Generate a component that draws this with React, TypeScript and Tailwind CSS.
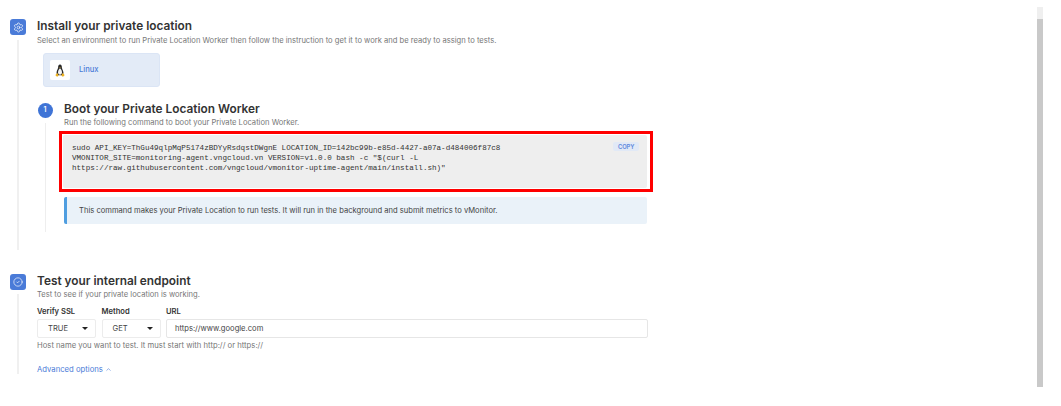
import { Settings, CircleCheck, ChevronUp } from "lucide-react";

function Tux() {
  return (
    <svg width="10" height="13" viewBox="0 0 12 14" preserveAspectRatio="none">
      <path d="M6 0.5C4.2 0.5 3.7 2 3.8 3.6C3.8 5 2.2 6.6 1.9 9C1.7 10.6 2.6 11.6 3.2 12H8.8C9.6 11.4 10.4 10.4 10.1 8.8C9.7 6.6 8.2 5 8.2 3.6C8.3 2 7.8 0.5 6 0.5Z" fill="#2a2a2a" />
      <path d="M6 4.6C4.8 5.2 3.6 7.2 3.6 9C3.6 10.6 4.6 11.6 6 11.6C7.4 11.6 8.4 10.6 8.4 9C8.4 7.2 7.2 5.2 6 4.6Z" fill="#f4f4f4" />
      <path d="M5 3.4L7 3.4L6 4.6Z" fill="#e8a81c" />
      <path d="M0.8 11.4L3 9.8L4.4 12.4L2.6 13.6L0.8 12.6Z" fill="#eeb11e" />
      <path d="M11.2 11.4L9 9.8L7.6 12.4L9.4 13.6L11.2 12.6Z" fill="#eeb11e" />
    </svg>
  );
}

function Caret() {
  return (
    <svg width="6" height="3" viewBox="0 0 6 3" className="shrink-0">
      <path d="M0 0H6L3 3Z" fill="#222" />
    </svg>
  );
}

function Select({ value, className }: { value: string; className: string }) {
  return (
    <div className={`flex h-[19px] items-center justify-between rounded-[2px] border border-[#ececec] bg-white pl-[10px] pr-[7px] text-[7.6px] text-[#444] ${className}`}>
      <span>{value}</span>
      <Caret />
    </div>
  );
}

export default function App() {
  return (
    <div className="relative h-[406px] w-[1061px] overflow-hidden bg-white pl-[10px] pt-[19px] font-['Inter',sans-serif]">
      <section className="flex h-[231px] w-[640px] gap-[11px]">
        <div className="flex w-[16px] shrink-0 flex-col items-center">
          <div className="flex h-[16px] w-[16px] items-center justify-center rounded-[3px] bg-[#4a7bd8]">
            <Settings size={11} color="#fff" strokeWidth={1.5} />
          </div>
          <div className="mt-[5px] w-[2px] flex-1 bg-[#f0f0f0]" />
        </div>
        <div className="min-w-0 flex-1">
          <h2 className="text-[11.85px] font-semibold leading-[15px] text-[#333]">Install your private location</h2>
          <p className="mt-[2px] whitespace-nowrap text-[7.6px] leading-[9px] text-[#777]">
            Select an environment to run Private Location Worker then follow the instruction to get it to work and be ready to assign to tests.
          </p>
          <div className="ml-[6px] mt-[8px] flex h-[34px] w-[117px] items-center gap-[9px] rounded-[3px] border border-[#dbe5f5] bg-[#e3ebf7] pl-[6px]">
            <div className="flex h-[20px] w-[20px] items-center justify-center rounded-[2px] bg-white">
              <Tux />
            </div>
            <span className="text-[7.6px] font-medium text-[#4a7bd8]">Linux</span>
          </div>
          <div className="ml-[1px] mt-[16px] flex gap-[12px]">
            <div className="flex w-[14px] shrink-0 flex-col items-center">
              <div className="flex h-[15px] w-[15px] shrink-0 items-center justify-center rounded-full bg-[#3f74d6] text-[7px] font-semibold text-white">1</div>
              <div className="mt-[5px] h-[109px] w-[1px] bg-[#eeeeee]" />
            </div>
            <div className="-mt-[1px] min-w-0">
              <h3 className="text-[11.85px] font-semibold leading-[15px] text-[#333]">Boot your Private Location Worker</h3>
              <p className="mt-[1px] text-[7.6px] leading-[9px] text-[#777]">Run the following command to boot your Private Location Worker.</p>
              <div className="-ml-[5px] mt-[4px] h-[61px] w-[594px] border-[3px] border-[#ff0000] bg-white pb-[1px] pl-[1px] pr-[3px] pt-[1px]">
                <div className="flex h-full items-start justify-between rounded-[2px] bg-[#eeeeee] pl-[9px] pr-[8px] pt-[7px]">
                  <pre className="mt-[1px] font-['Liberation_Mono',monospace] text-[7.6px] leading-[10.2px] text-[#333]">{`sudo API_KEY=ThGu49qlpMqP5174zBDYyRsdqstDWgnE LOCATION_ID=142bc99b-e85d-4427-a07a-d484006f87c8
VMONITOR_SITE=monitoring-agent.vngcloud.vn VERSION=v1.0.0 bash -c "$(curl -L
https://raw.githubusercontent.com/vngcloud/vmonitor-uptime-agent/main/install.sh)"`}</pre>
                  <span className="rounded-[2px] bg-[#e1e9f6] px-[4.5px] py-[1.5px] text-[5.8px] font-semibold leading-[6px] text-[#5c86dc]">COPY</span>
                </div>
              </div>
              <div className="mt-[5px] flex h-[27px] w-[583px] items-center rounded-[2px] border-l-[3px] border-[#4f9ee0] bg-[#eaf2f9] pl-[12px] text-[7.6px] text-[#444]">
                This command makes your Private Location to run tests. It will run in the background and submit metrics to vMonitor.
              </div>
            </div>
          </div>
        </div>
      </section>

      <section className="mt-[24px] flex w-[640px] gap-[11px]">
        <div className="flex w-[16px] shrink-0 flex-col items-center">
          <div className="flex h-[16px] w-[16px] items-center justify-center rounded-[3px] bg-[#4a7bd8]">
            <CircleCheck size={10} color="#fff" strokeWidth={1.6} />
          </div>
          <div className="mt-[4px] h-[80px] w-[2px] bg-[#f0f0f0]" />
        </div>
        <div className="min-w-0 flex-1">
          <h2 className="text-[11.85px] font-semibold leading-[15px] text-[#333]">Test your internal endpoint</h2>
          <p className="mt-[1px] text-[7.6px] leading-[9px] text-[#777]">Test to see if your private location is working.</p>
          <div className="mt-[8px] flex gap-[5.5px]">
            <div className="flex flex-col">
              <label className="text-[7.6px] font-semibold leading-[10px] text-[#333]">Verify SSL</label>
              <Select value="TRUE" className="mt-[2px] w-[59px]" />
            </div>
            <div className="flex flex-col">
              <label className="text-[7.6px] font-semibold leading-[10px] text-[#333]">Method</label>
              <Select value="GET" className="mt-[2px] w-[59px]" />
            </div>
            <div className="flex flex-1 flex-col">
              <label className="text-[7.6px] font-semibold leading-[10px] text-[#333]">URL</label>
              <div className="mt-[2px] flex h-[19px] w-[482px] items-center rounded-[2px] border border-[#e6e6e6] bg-white pl-[8px] text-[7.6px] text-[#444]">https://www.google.com</div>
            </div>
          </div>
          <p className="mt-[3px] text-[7.7px] leading-[9px] text-[#777]">Host name you want to test. It must start with http:// or https://</p>
          <div className="mt-[15px] flex items-center gap-[2px] text-[7.7px] leading-[9px] text-[#4a7bd8]">
            Advanced options <ChevronUp size={7} strokeWidth={2} />
          </div>
        </div>
      </section>

      <div className="absolute left-[1037px] top-[7px] flex h-[380px] w-[6px] flex-col">
        <div className="h-[12px] bg-[#efefef]" />
        <div className="flex-1 bg-[#c9c9c9]" />
      </div>
    </div>
  );
}
